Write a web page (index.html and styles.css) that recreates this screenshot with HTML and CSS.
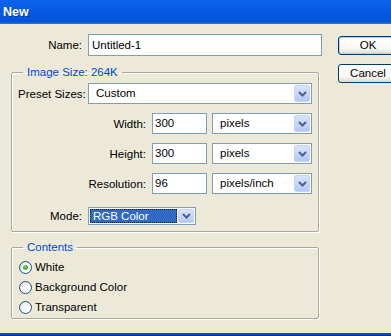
FILE: index.html
```html
<!DOCTYPE html>
<html lang="en">
<head>
    <meta charset="UTF-8">
    <meta name="viewport" content="width=device-width, initial-scale=1.0">
    <title>New</title>
    <link rel="stylesheet" href="styles.css">
</head>
<body>
    <div class="titlebar">New</div>
    <div class="dialog">
        <div class="main">
            <div class="name-row">
                <span class="lbl lbl-main">Name:</span>
                <div class="field name-field">Untitled-1</div>
            </div>

            <fieldset class="group size-group">
                <legend>Image Size: 264K</legend>
                <div class="row">
                    <span class="lbl lbl-main">Preset Sizes:</span>
                    <div class="combo preset">
                        <span class="combo-text">Custom</span>
                        <span class="arrow"><svg width="9" height="6" viewBox="0 0 9 6"><path d="M1 1 L4.5 4.5 L8 1" fill="none" stroke="#4d6185" stroke-width="2"/></svg></span>
                    </div>
                </div>
                <div class="row">
                    <span class="lbl lbl-dim">Width:</span>
                    <div class="field num-field">300</div>
                    <div class="combo unit">
                        <span class="combo-text">pixels</span>
                        <span class="arrow"><svg width="9" height="6" viewBox="0 0 9 6"><path d="M1 1 L4.5 4.5 L8 1" fill="none" stroke="#4d6185" stroke-width="2"/></svg></span>
                    </div>
                </div>
                <div class="row">
                    <span class="lbl lbl-dim">Height:</span>
                    <div class="field num-field">300</div>
                    <div class="combo unit">
                        <span class="combo-text">pixels</span>
                        <span class="arrow"><svg width="9" height="6" viewBox="0 0 9 6"><path d="M1 1 L4.5 4.5 L8 1" fill="none" stroke="#4d6185" stroke-width="2"/></svg></span>
                    </div>
                </div>
                <div class="row">
                    <span class="lbl lbl-dim">Resolution:</span>
                    <div class="field num-field">96</div>
                    <div class="combo unit">
                        <span class="combo-text">pixels/inch</span>
                        <span class="arrow"><svg width="9" height="6" viewBox="0 0 9 6"><path d="M1 1 L4.5 4.5 L8 1" fill="none" stroke="#4d6185" stroke-width="2"/></svg></span>
                    </div>
                </div>
                <div class="row mode-row">
                    <span class="lbl lbl-main">Mode:</span>
                    <div class="combo mode">
                        <span class="combo-text selected">RGB Color</span>
                        <span class="arrow"><svg width="9" height="6" viewBox="0 0 9 6"><path d="M1 1 L4.5 4.5 L8 1" fill="none" stroke="#4d6185" stroke-width="2"/></svg></span>
                    </div>
                </div>
            </fieldset>

            <fieldset class="group contents-group">
                <legend>Contents</legend>
                <div class="radio-row"><span class="radio checked"></span>White</div>
                <div class="radio-row"><span class="radio"></span>Background Color</div>
                <div class="radio-row"><span class="radio"></span>Transparent</div>
            </fieldset>
        </div>

        <div class="buttons">
            <div class="btn btn-default">OK</div>
            <div class="btn">Cancel</div>
        </div>
    </div>
    <div class="frame-bottom"></div>
</body>
</html>
```

FILE: styles.css
```css
body {
    margin: 0;
    width: 391px;
    height: 336px;
    overflow: hidden;
    display: flex;
    flex-direction: column;
    background-color: #ece9d8;
    font-family: "Liberation Sans", Arial, sans-serif;
    font-size: 11.5px;
    color: #000;
}
.titlebar {
    height: 24px;
    flex-shrink: 0;
    padding-left: 3px;
    line-height: 24px;
    font-size: 12.5px;
    font-weight: bold;
    color: #fff;
    background: linear-gradient(#0b64ea, #065be3 40%, #0454d8 90%, #2f74d6);
    text-shadow: 1px 1px 0 #0a3a9c;
}
.dialog {
    display: flex;
    gap: 16px;
    padding: 10px 0 0 11px;
}
.main {
    width: 311px;
    flex-shrink: 0;
}
.name-row {
    display: flex;
    align-items: center;
    gap: 6px;
    height: 22px;
    padding-left: 7px;
}
.lbl {
    text-align: right;
    white-space: nowrap;
}
.lbl-main {
    width: 64px;
}
.lbl-dim {
    width: 128px;
}
.field {
    box-sizing: border-box;
    height: 21px;
    line-height: 19px;
    padding: 0 3px;
    background-color: #fff;
    border: 1px solid #7f9db9;
    white-space: nowrap;
}
.name-field {
    width: 234px;
    height: 22px;
    line-height: 20px;
}
.num-field {
    width: 55px;
    padding-left: 2px;
}
.group {
    box-sizing: border-box;
    width: 308px;
    margin: 0;
    padding: 0 6px;
    min-width: 0;
    border: 1px solid #aca899;
    border-radius: 2px;
    box-shadow: 1px 1px 0 #fff, inset 1px 1px 0 #fff;
}
.group legend {
    margin-left: 5px;
    padding: 0 4px;
    line-height: 14px;
    color: #0046d5;
}
.size-group {
    margin-top: 9px;
    padding-top: 4px;
    padding-bottom: 6px;
}
.row {
    display: flex;
    align-items: center;
    gap: 6px;
    height: 21px;
    margin-bottom: 9px;
}
.row .unit {
    margin-left: -1px;
}
.mode-row {
    height: 18px;
    margin-top: 13px;
    margin-bottom: 0;
}
.combo {
    box-sizing: border-box;
    display: flex;
    align-items: stretch;
    height: 21px;
    padding: 1px;
    background-color: #fff;
    border: 1px solid #7f9db9;
}
.combo-text {
    flex: 1;
    padding-left: 6px;
    line-height: 17px;
    white-space: nowrap;
}
.preset {
    width: 225px;
}
.unit {
    width: 100px;
}
.mode {
    width: 108px;
    height: 18px;
}
.mode .combo-text {
    line-height: 14px;
}
.combo-text.selected {
    padding-left: 3px;
    margin-right: 1px;
    color: #fff;
    background-color: #316ac5;
    outline: 1px dotted #1a1a1a;
    outline-offset: -1px;
}
.arrow {
    box-sizing: border-box;
    width: 16px;
    display: flex;
    align-items: center;
    justify-content: center;
    border: 1px solid #c3d3fd;
    border-radius: 2px;
    background: linear-gradient(#d9e3fc, #c3d4fb 60%, #b2c7f6);
}
.contents-group {
    margin-top: 8px;
    padding-top: 3px;
    padding-bottom: 1px;
}
.radio-row {
    display: flex;
    align-items: center;
    gap: 3px;
    height: 20px;
}
.radio {
    box-sizing: border-box;
    width: 13px;
    height: 13px;
    margin-left: 1px;
    border: 1px solid #1c5180;
    border-radius: 50%;
    background: radial-gradient(circle at 70% 70%, #fff 30%, #dcdcd7);
    display: flex;
    align-items: center;
    justify-content: center;
}
.radio.checked::after {
    content: "";
    width: 5px;
    height: 5px;
    border-radius: 50%;
    background: radial-gradient(circle at 35% 35%, #63d063, #21a121);
}
.buttons {
    padding-top: 2px;
    display: flex;
    flex-direction: column;
    gap: 9px;
}
.btn {
    box-sizing: border-box;
    width: 60px;
    height: 19px;
    line-height: 17px;
    text-align: center;
    border: 1px solid #003c74;
    border-radius: 3px;
    background: linear-gradient(#ffffff, #f6f6f2 70%, #dcd8cc);
}
.btn-default {
    box-shadow: inset 0 0 0 1px #b6cdf4;
}
.frame-bottom {
    margin-top: auto;
    height: 3px;
    background: linear-gradient(#1a4ed2, #0a2fa8);
}
```
